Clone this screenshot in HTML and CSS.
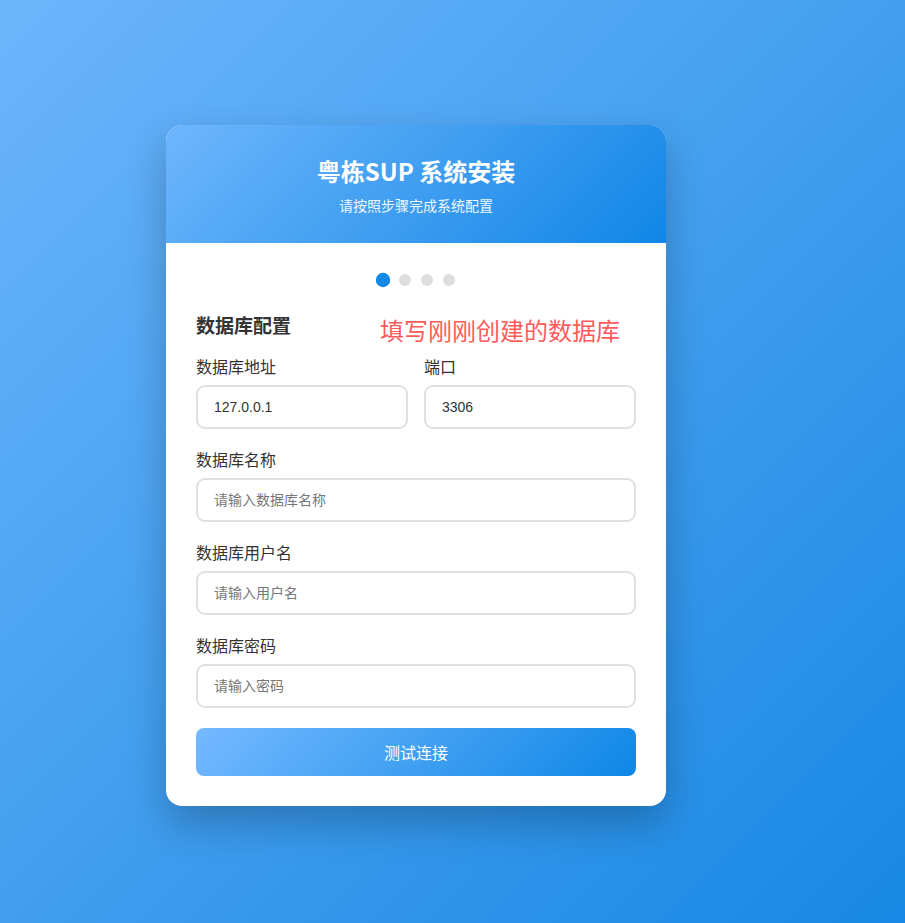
FILE: index.html
```html
<!DOCTYPE html>
<html lang="zh-CN">
<head>
<meta charset="utf-8">
<title>粤栋SUP 系统安装</title>
<link rel="stylesheet" href="styles.css">
</head>
<body>
<div class="page">
  <div class="card">
    <div class="card-header">
      <h1 class="title">粤栋SUP 系统安装</h1>
      <p class="subtitle">请按照步骤完成系统配置</p>
    </div>
    <div class="card-body">
      <div class="steps">
        <span class="dot active"></span>
        <span class="dot"></span>
        <span class="dot"></span>
        <span class="dot"></span>
      </div>
      <div class="section-head">
        <h3 class="section-title">数据库配置</h3>
        <span class="note">填写刚刚创建的数据库</span>
      </div>
      <div class="row">
        <div class="group">
          <label class="label">数据库地址</label>
          <input class="input" type="text" value="127.0.0.1">
        </div>
        <div class="group">
          <label class="label">端口</label>
          <input class="input" type="text" value="3306">
        </div>
      </div>
      <div class="group">
        <label class="label">数据库名称</label>
        <input class="input" type="text" placeholder="请输入数据库名称">
      </div>
      <div class="group">
        <label class="label">数据库用户名</label>
        <input class="input" type="text" placeholder="请输入用户名">
      </div>
      <div class="group">
        <label class="label">数据库密码</label>
        <input class="input" type="password" placeholder="请输入密码">
      </div>
      <button class="btn" type="button">测试连接</button>
    </div>
  </div>
</div>
</body>
</html>
```
FILE: styles.css
```css
html, body {
  margin: 0;
  padding: 0;
}
body {
  min-height: 923px;
  background: linear-gradient(135deg, #6cb5fb 0%, #1888e4 100%);
  font-family: "Noto Sans CJK SC", "Noto Sans", sans-serif;
  color: #333;
}
.page {
  padding: 125px 0 0 166px;
}
.card {
  width: 500px;
  background: #fff;
  border-radius: 16px;
  overflow: hidden;
  box-shadow: 0 18px 40px rgba(0, 0, 0, 0.24);
}
.card-header {
  background: linear-gradient(135deg, #6eb6fc 0%, #1186e6 100%);
  color: #fff;
  text-align: center;
  padding: 30px 30px 28px;
  height: 118px;
  box-sizing: border-box;
}
.title {
  margin: 0 0 8px;
  font-size: 24px;
  line-height: 32px;
  font-weight: 700;
}
.subtitle {
  margin: 0;
  font-size: 14px;
  line-height: 20px;
  opacity: 0.92;
}
.card-body {
  padding: 30px;
}
.steps {
  display: flex;
  justify-content: center;
  gap: 10px;
  height: 12px;
  margin: 1px 0 27px;
}
.dot {
  width: 12px;
  height: 12px;
  border-radius: 50%;
  background: #dedede;
}
.dot.active {
  background: #1188e6;
  transform: scale(1.2);
}
.section-head {
  position: relative;
  margin-bottom: 19px;
}
.section-title {
  margin: 0;
  font-size: 19px;
  line-height: 24px;
  font-weight: 700;
  color: #333;
}
.note {
  position: absolute;
  left: 184px;
  top: 1px;
  font-size: 24px;
  line-height: 32px;
  color: #ff5b5b;
  white-space: nowrap;
}
.row {
  display: grid;
  grid-template-columns: 1fr 1fr;
  gap: 16px;
}
.group {
  margin-bottom: 20px;
}
.label {
  display: block;
  font-size: 16px;
  line-height: 21px;
  margin-bottom: 8px;
  color: #333;
}
.input {
  display: block;
  width: 100%;
  height: 44px;
  box-sizing: border-box;
  border: 2px solid #e0e0e0;
  border-radius: 9px;
  padding: 0 16px;
  font-family: "Liberation Sans", "Noto Sans CJK SC", sans-serif;
  font-size: 14px;
  color: #333;
  background: #fff;
  outline: none;
}
.input::placeholder {
  color: #777;
}
.btn {
  display: block;
  width: 100%;
  height: 48px;
  border: none;
  border-radius: 8px;
  background: linear-gradient(135deg, #74b9ff 0%, #0f87e6 100%);
  color: #fff;
  font-family: "Noto Sans CJK SC", sans-serif;
  font-size: 16px;
  cursor: pointer;
}
```
